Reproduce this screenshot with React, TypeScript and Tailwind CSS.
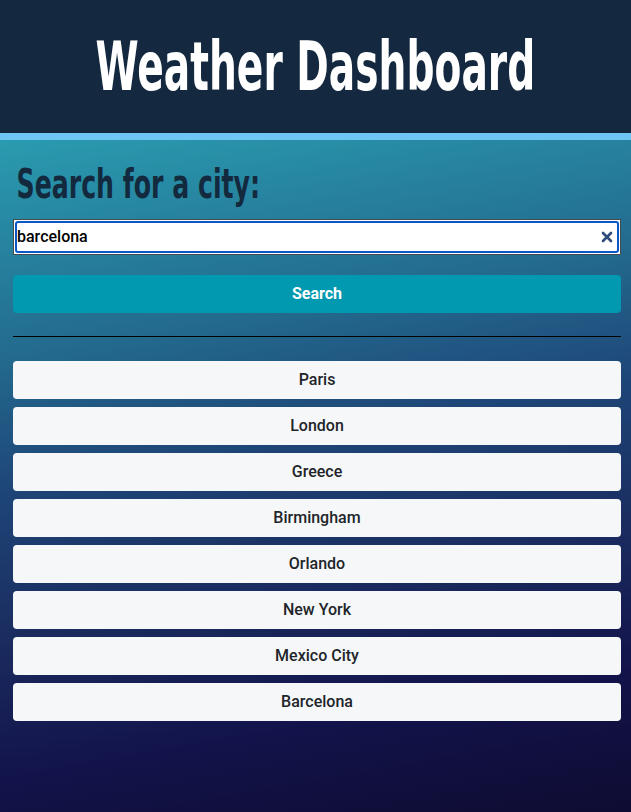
const cities = [
  "Paris",
  "London",
  "Greece",
  "Birmingham",
  "Orlando",
  "New York",
  "Mexico City",
  "Barcelona",
];

export default function App() {
  return (
    <div className="min-h-[812px] flex flex-col font-['Roboto',sans-serif]">
      <header className="h-[140px] flex items-center justify-center bg-[#14293f] border-b-[7px] border-[#6ec6f5]">
        <h1 className="inline-block scale-x-[0.64] origin-center font-['DejaVu_Sans_Condensed','DejaVu_Sans',sans-serif] font-bold text-[68px] leading-none text-white whitespace-nowrap">
          Weather Dashboard
        </h1>
      </header>

      <main className="flex-1 pl-[13px] pr-[10px] pt-[24px] pb-10 bg-[linear-gradient(170deg,#2a9bb0_0%,#236a8e_28%,#1e4577_45%,#1a2a5e_65%,#12134a_82%,#0e0c32_100%)]">
        <h2 className="inline-block origin-left scale-x-[0.7] px-[5px] font-['DejaVu_Sans_Condensed','DejaVu_Sans',sans-serif] font-bold text-[40px] leading-none text-[#13293d] whitespace-nowrap">
          Search for a city:
        </h2>

        {/* search input */}
        <div className="mt-[14px] border border-[#4a4a4a] bg-white p-px">
          <div className="flex items-center h-[32px] rounded-[3px] border-2 border-[#0b57c9] pl-0 pr-[4px]">
            <input
              className="flex-1 bg-transparent outline-none text-[16px] font-medium text-black"
              defaultValue="barcelona"
            />
            <svg width="12" height="12" viewBox="0 0 12 12" className="shrink-0">
              <path
                d="M2 2l8 8M10 2l-8 8"
                stroke="#2f4b7c"
                strokeWidth="2.6"
                strokeLinecap="round"
              />
            </svg>
          </div>
        </div>

        <button className="mt-[20px] w-full h-[38px] rounded-[4px] bg-[#0099b0] text-white text-[16px] font-bold">
          Search
        </button>

        <hr className="mt-[23px] border-t border-black" />

        <div className="mt-[24px] flex flex-col gap-[8px]">
          {cities.map((city) => (
            <button
              key={city}
              className="w-full h-[38px] rounded-[4px] bg-[#f6f7f9] text-[#212529] text-[16px] font-medium"
            >
              {city}
            </button>
          ))}
        </div>
      </main>
    </div>
  );
}
